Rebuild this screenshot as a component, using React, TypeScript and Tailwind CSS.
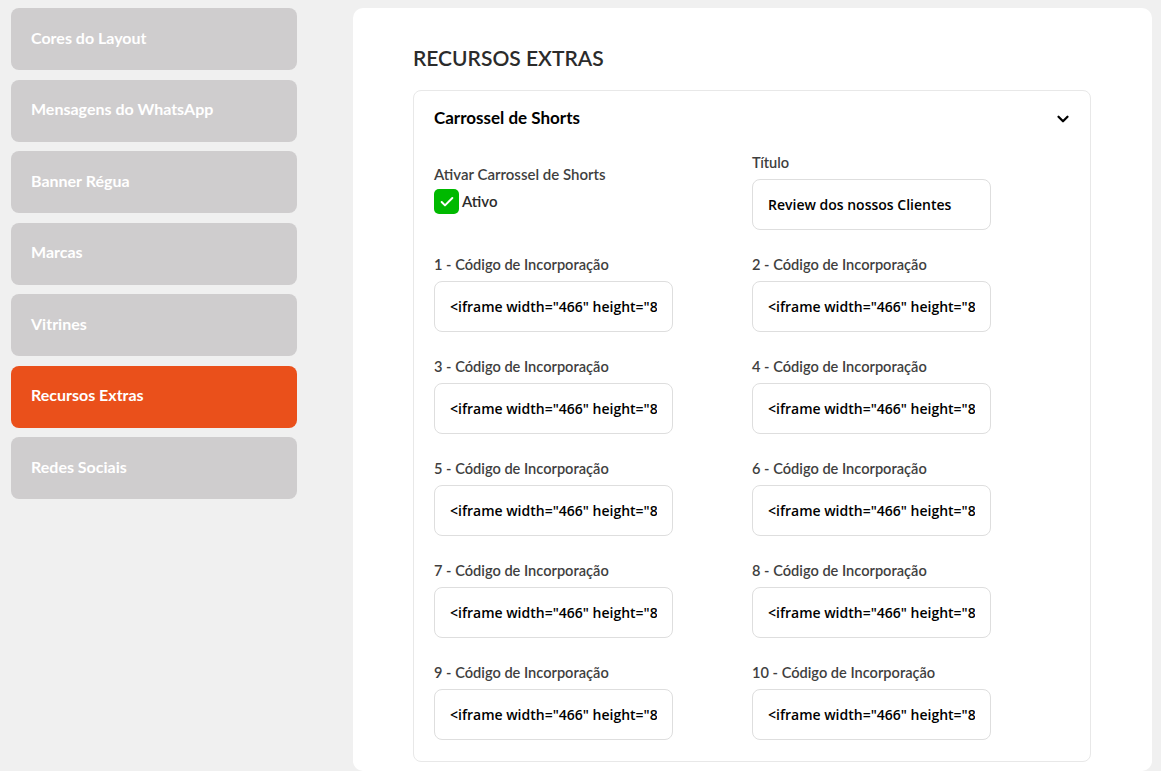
import { ChevronDown, Check } from 'lucide-react';

const menu = [
  'Cores do Layout',
  'Mensagens do WhatsApp',
  'Banner Régua',
  'Marcas',
  'Vitrines',
  'Recursos Extras',
  'Redes Sociais',
];

const iframeValue = '<iframe width="466" height="815" src="https://www.youtube.com/embed/shorts"></iframe>';

const Field = ({ label, value }: { label: string; value: string }) => (
  <div className="flex flex-col">
    <label className="text-[14.6px] leading-5 font-semibold text-[#3f3f3f] mb-1.5">{label}</label>
    <input
      readOnly
      value={value}
      className="w-[239px] h-[51px] rounded-lg border border-[#dedede] bg-white pl-[15px] pr-[15px] text-[14px] font-semibold text-black outline-none font-['Open_Sans',sans-serif]"
    />
  </div>
);

export default function App() {
  return (
    <div className="min-h-[771px] h-[771px] overflow-hidden bg-[#f0f0f0] flex font-['Lato',sans-serif]">
      <aside className="w-[286px] ml-[11px] mt-2 flex flex-col gap-[9.5px] shrink-0">
        {menu.map((item) => (
          <button
            key={item}
            className={`h-[62px] rounded-lg px-5 pb-[3px] text-left text-[16px] font-bold text-white ${
              item === 'Recursos Extras' ? 'bg-[#ea501b]' : 'bg-[#cfcdce]'
            }`}
          >
            {item}
          </button>
        ))}
      </aside>

      <main className="ml-[56px] mr-[10px] mt-2 flex-1 rounded-[10px] bg-white pl-[60px] pr-[61px] pt-[36px]">
        <h1 className="text-[21px] leading-7 font-semibold text-[#2b2b2b]">RECURSOS EXTRAS</h1>

        <section className="mt-[18px] rounded-lg border border-[#e8e8e8] px-[20px] pb-[21px]">
          <div className="flex items-center justify-between pt-[17px] pb-[19px]">
            <h2 className="text-[17px] leading-5 font-bold text-black">Carrossel de Shorts</h2>
            <ChevronDown size={18} strokeWidth={3} className="text-black -mr-[2px] mt-[2px]" />
          </div>

          <div className="grid grid-cols-[318px_318px] gap-y-[25px] pt-[6px]">
            <div className="flex flex-col self-start mt-[11px]">
              <label className="text-[15px] leading-5 font-semibold text-[#3f3f3f] mb-[5px]">
                Ativar Carrossel de Shorts
              </label>
              <div className="flex items-center gap-[3px]">
                <span className="w-[25px] h-[25px] rounded-[5px] bg-[#00b900] flex items-center justify-center">
                  <Check size={16} strokeWidth={3} className="text-white" />
                </span>
                <span className="text-[15px] font-semibold text-[#2b2b2b]">Ativo</span>
              </div>
            </div>
            <Field label="Título" value="Review dos nossos Clientes" />
            {Array.from({ length: 10 }, (_, i) => (
              <Field key={i} label={`${i + 1} - Código de Incorporação`} value={iframeValue} />
            ))}
          </div>
        </section>
      </main>
    </div>
  );
}
